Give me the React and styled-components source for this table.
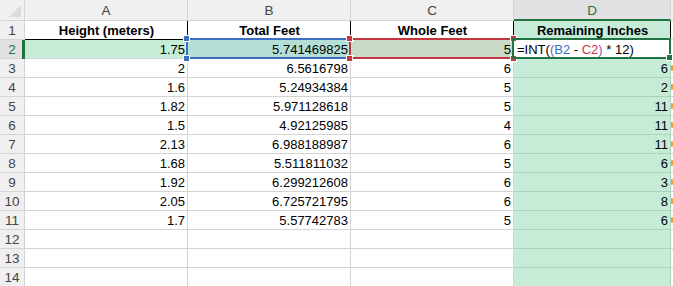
import React from 'react'
import styled, { createGlobalStyle, css } from 'styled-components'

const GlobalStyle = createGlobalStyle`
  html, body {
    margin: 0;
    padding: 0;
    background: #ffffff;
    overflow: hidden;
  }
  body {
    font-family: "Liberation Sans", Arial, sans-serif;
  }
`

const GRID = '#d4d4d4'
const SEL_FILL = '#c6ecd8'
const SEL_GRID = '#a9d4bb'
const EXCEL_GREEN = '#217346'

const Sheet = styled.div`
  display: grid;
  grid-template-columns: 25px 163px 163px 163px 157px 2px;
  grid-template-rows: 21px;
  grid-auto-rows: 19px;
  width: 673px;
  height: 286px;
  overflow: hidden;
  font-size: 13px;
  color: #000;
`

const Corner = styled.div`
  position: relative;
  background: #f0f0f0;
  border-right: 1px solid ${GRID};
  border-bottom: 1px solid ${GRID};

  &:after {
    content: '';
    position: absolute;
    right: 3px;
    bottom: 3px;
    width: 0;
    height: 0;
    border-left: 12px solid transparent;
    border-bottom: 12px solid #dcdcdc;
  }
`

const ColHead = styled.div`
  display: flex;
  align-items: center;
  justify-content: center;
  font-size: 13.5px;
  background: ${({ $active }) => ($active ? '#e1e1e1' : '#f0f0f0')};
  color: ${({ $active }) => ($active ? EXCEL_GREEN : '#444')};
  border-right: 1px solid ${GRID};
  border-bottom: ${({ $active }) =>
    $active ? `2px solid ${EXCEL_GREEN}` : `1px solid ${GRID}`};
  padding-top: ${({ $active }) => ($active ? '1px' : '0')};
`

const RowHead = styled.div`
  position: relative;
  display: flex;
  align-items: center;
  justify-content: center;
  font-size: 13.5px;
  background: ${({ $active }) => ($active ? '#e1e1e1' : '#f0f0f0')};
  color: ${({ $active }) => ($active ? EXCEL_GREEN : '#444')};
  border-right: 1px solid ${GRID};
  border-bottom: 1px solid ${GRID};

  ${({ $active }) =>
    $active &&
    css`
      &:after {
        content: '';
        position: absolute;
        right: -1px;
        top: 0;
        bottom: -1px;
        width: 3px;
        background: ${EXCEL_GREEN};
      }
    `}
`

const Cell = styled.div`
  position: relative;
  display: flex;
  align-items: center;
  justify-content: ${({ $align }) =>
    $align === 'center' ? 'center' : $align === 'left' ? 'flex-start' : 'flex-end'};
  padding: 1px 2px 0 3px;
  white-space: nowrap;
  overflow: visible;
  background: ${({ $fill }) => $fill || '#ffffff'};
  border-right: 1px solid ${({ $grid }) => $grid || GRID};
  border-bottom: 1px solid ${({ $grid }) => $grid || GRID};
  font-weight: ${({ $bold }) => ($bold ? 700 : 400)};
`

const TitleCell = styled(Cell)`
  border-right-color: #000;
  border-bottom-color: #000;
`

const RangeBox = styled.div`
  position: absolute;
  left: -2px;
  top: -2px;
  right: -1px;
  bottom: -1px;
  border: 2px solid ${({ $color }) => $color};
  pointer-events: none;
  z-index: ${({ $z }) => $z || 1};
`

const Handle = styled.span`
  position: absolute;
  width: 5px;
  height: 5px;
  background: ${({ $color }) => $color};
  border: 1px solid #ffffff;
  ${({ $x }) => ($x === 'l' ? 'left: -5px;' : 'right: -5px;')}
  ${({ $y }) => ($y === 't' ? 'top: -5px;' : 'bottom: -5px;')}
`

const FillHandle = styled.span`
  position: absolute;
  right: -4px;
  bottom: -4px;
  width: 5px;
  height: 5px;
  background: ${EXCEL_GREEN};
  border: 1px solid #ffffff;
`

const Formula = styled.span`
  color: ${({ $c }) => $c || '#000'};
  white-space: pre;
`

const EdgeCell = styled.div`
  position: relative;
  background: #ffffff;
  border-bottom: 1px solid ${GRID};
`

const EdgeHead = styled.div`
  background: #f0f0f0;
  border-bottom: 1px solid ${GRID};
`

const Flag = styled.span`
  position: absolute;
  left: 0;
  top: 6px;
  width: 2px;
  height: 6px;
  border-radius: 1px;
  background: #f0a030;
`

const rows = [
  ['1.75', '5.741469825', '5', null],
  ['2', '6.5616798', '6', '6'],
  ['1.6', '5.24934384', '5', '2'],
  ['1.82', '5.971128618', '5', '11'],
  ['1.5', '4.92125985', '4', '11'],
  ['2.13', '6.988188987', '6', '11'],
  ['1.68', '5.511811032', '5', '6'],
  ['1.92', '6.299212608', '6', '3'],
  ['2.05', '6.725721795', '6', '8'],
  ['1.7', '5.57742783', '5', '6'],
  ['', '', '', ''],
  ['', '', '', ''],
  ['', '', '', ''],
]

const Corners = ({ color }) => (
  <>
    <Handle $color={color} $x="l" $y="t" />
    <Handle $color={color} $x="r" $y="t" />
    <Handle $color={color} $x="l" $y="b" />
    <Handle $color={color} $x="r" $y="b" />
  </>
)

const App = () => {
  return (
    <>
      <GlobalStyle />
      <Sheet>
        <Corner />
        <ColHead>A</ColHead>
        <ColHead>B</ColHead>
        <ColHead>C</ColHead>
        <ColHead $active>D</ColHead>
        <EdgeHead />

        <RowHead>1</RowHead>
        <TitleCell $bold $align="center">Height (meters)</TitleCell>
        <TitleCell $bold $align="center">Total Feet</TitleCell>
        <TitleCell $bold $align="center">Whole Feet</TitleCell>
        <TitleCell $bold $align="center" $fill={SEL_FILL}>
          Remaining Inches
        </TitleCell>
        <EdgeCell />

        {rows.map((r, i) => {
          const n = i + 2
          if (n === 2) {
            return (
              <React.Fragment key={n}>
                <RowHead $active>2</RowHead>
                <Cell $fill={SEL_FILL}>{r[0]}</Cell>
                <Cell $fill="#b4dfd5">
                  {r[1]}
                  <RangeBox $color="#3c6fc4">
                    <Corners color="#3c6fc4" />
                  </RangeBox>
                </Cell>
                <Cell $fill="#c9dbc6">
                  {r[2]}
                  <RangeBox $color="#c4383d" $z={2}>
                    <Corners color="#c4383d" />
                  </RangeBox>
                </Cell>
                <Cell $align="left" $fill="#ffffff">
                  <Formula>=INT(</Formula>
                  <Formula $c="#9b4fb4">(</Formula>
                  <Formula $c="#3c6fc4">B2</Formula>
                  <Formula> - </Formula>
                  <Formula $c="#c4383d">C2</Formula>
                  <Formula $c="#9b4fb4">)</Formula>
                  <Formula> * 12)</Formula>
                  <RangeBox $color={EXCEL_GREEN} $z={3}>
                    <FillHandle />
                  </RangeBox>
                </Cell>
                <EdgeCell />
              </React.Fragment>
            )
          }
          return (
            <React.Fragment key={n}>
              <RowHead>{n}</RowHead>
              <Cell>{r[0]}</Cell>
              <Cell>{r[1]}</Cell>
              <Cell>{r[2]}</Cell>
              <Cell $fill={SEL_FILL} $grid={SEL_GRID}>
                {r[3]}
              </Cell>
              <EdgeCell>{r[3] && <Flag />}</EdgeCell>
            </React.Fragment>
          )
        })}
      </Sheet>
    </>
  )
}

export default App
